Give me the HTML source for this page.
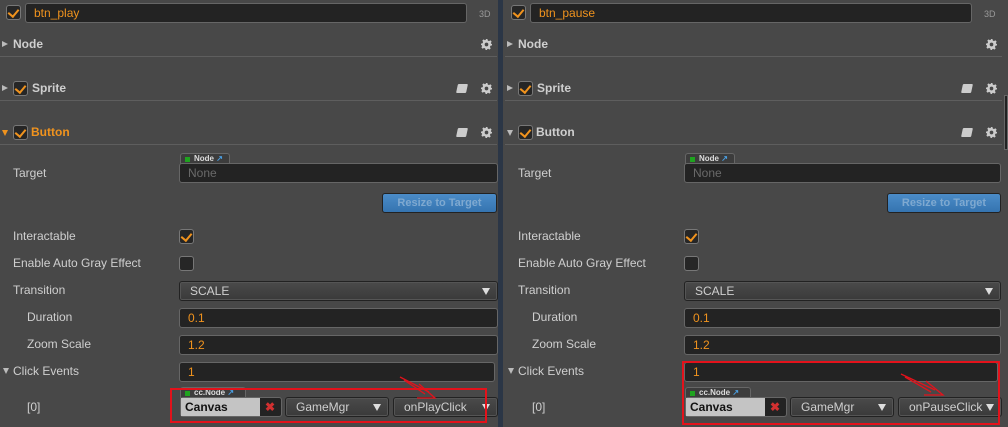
<!DOCTYPE html>
<html><head><style>
*{box-sizing:border-box;margin:0;padding:0}
body{width:1008px;height:427px;background:#484848;font-family:"Liberation Sans",Arial,sans-serif;font-size:12px;color:#cfcfcf;position:relative;overflow:hidden}
.p{position:absolute;top:0;width:498px;height:427px}
.a{position:absolute}
.lbl{position:absolute;line-height:14px;white-space:nowrap}
.cb{position:absolute;width:15px;height:15px;background:#262626;border:1px solid #777;border-radius:3px}
.cb.on::after{content:"";position:absolute;left:3px;top:1px;width:5px;height:8px;border:solid #f0931e;border-width:0 2.5px 2.5px 0;transform:rotate(40deg)}
.in{position:absolute;height:20px;background:#232323;border:1px solid #666;border-radius:3px;color:#f0931e;padding-left:8px;line-height:18px}
.sel{position:absolute;height:20px;background:linear-gradient(#4a4a4a,#3a3a3a);border:1px solid #222;border-radius:3px;color:#cfcfcf;padding-left:10px;line-height:18px;box-shadow:inset 0 0 0 1px #555}
.sel::after{content:"";position:absolute;right:7px;top:6px;border-left:4px solid transparent;border-right:4px solid transparent;border-top:7px solid #ddd}
.hd{position:absolute;left:0;width:497px;height:1px;background:#5e5e5e}
.b{font-weight:bold}
.tri{position:absolute;width:0;height:0;border-top:3.5px solid transparent;border-bottom:3.5px solid transparent;border-left:6px solid #bbb}
.trd{position:absolute;width:0;height:0;border-left:3.5px solid transparent;border-right:3.5px solid transparent;border-top:6px solid #bbb}
.gear{position:absolute;width:11px;height:11px}
.book{position:absolute;width:10px;height:9px;background:#ccc;border-radius:1px;transform:skewX(-12deg)}
.tab{position:absolute;height:11px;background:#3c3c3c;border:1px solid #666;border-bottom:none;border-radius:3px 3px 0 0;font-size:8px;font-weight:bold;line-height:10px;padding-left:13px;color:#ddd}
.tab::before{content:"";position:absolute;left:4px;top:3px;width:5px;height:5px;background:#1fa31f}
.red{position:absolute;border:2px solid #e3121b}
.clip{display:block;overflow:hidden;white-space:nowrap;width:78px}
</style></head><body>

<div class="a" style="left:498px;top:0;width:5px;height:427px;background:#2b3646"></div>
<div class="a" style="left:1004px;top:95px;width:4px;height:55px;background:#222;border:1px solid #666"></div>

<svg width="0" height="0" style="position:absolute"><defs><symbol id="g" viewBox="0 0 12 12"><path fill="#ccc" d="M5 0h2l.4 1.7 1.3.6 1.5-.9 1.4 1.4-.9 1.5.6 1.3L12 5v2l-1.7.4-.6 1.3.9 1.5-1.4 1.4-1.5-.9-1.3.6L7 12H5l-.4-1.7-1.3-.6-1.5.9-1.4-1.4.9-1.5-.6-1.3L0 7V5l1.7-.4.6-1.3-.9-1.5 1.4-1.4 1.5.9 1.3-.6z"/><circle cx="6" cy="6" r="2" fill="#484848"/></symbol></defs></svg>

<div class="p" style="left:0">
 <div class="cb on" style="left:6px;top:5px"></div>
 <div class="in" style="left:25px;top:3px;width:442px;">btn_play</div>
 <div class="lbl" style="left:479px;top:7px;font-size:9px;color:#999">3D</div>
 <div class="tri" style="left:2px;top:41px"></div>
 <div class="lbl b" style="left:13px;top:37px">Node</div>
 <svg class="gear" style="left:481px;top:39px"><use href="#g"/></svg>
 <div class="hd" style="top:56px"></div>
 <div class="tri" style="left:2px;top:85px"></div>
 <div class="cb on" style="left:13px;top:81px"></div>
 <div class="lbl b" style="left:32px;top:81px">Sprite</div>
 <div class="book" style="left:457px;top:84px"></div>
 <svg class="gear" style="left:481px;top:83px"><use href="#g"/></svg>
 <div class="hd" style="top:100px"></div>
 <div class="trd" style="left:2px;top:130px;border-top-color:#f0931e"></div>
 <div class="cb on" style="left:13px;top:125px"></div>
 <div class="lbl b" style="left:31px;top:125px;color:#f0931e">Button</div>
 <div class="book" style="left:457px;top:128px"></div>
 <svg class="gear" style="left:481px;top:127px"><use href="#g"/></svg>
 <div class="hd" style="top:144px"></div>
 <div class="lbl" style="left:13px;top:166px">Target</div>
 <div class="tab" style="left:180px;top:153px;width:50px">Node <span style="color:#4a9ee0">↗</span></div>
 <div class="in" style="left:179px;top:163px;width:319px;color:#6a6a6a">None</div>
 <div class="a" style="left:382px;top:193px;width:115px;height:20px;background:linear-gradient(#4b8cc8,#3574b0);border:1px solid #222;border-radius:3px;color:#7fa9d0;font-weight:bold;font-size:11px;text-align:center;line-height:18px">Resize to Target</div>
 <div class="lbl" style="left:13px;top:229px">Interactable</div>
 <div class="cb on" style="left:179px;top:229px"></div>
 <div class="lbl" style="left:13px;top:256px">Enable Auto Gray Effect</div>
 <div class="cb" style="left:179px;top:256px"></div>
 <div class="lbl" style="left:13px;top:283px">Transition</div>
 <div class="sel" style="left:179px;top:281px;width:319px">SCALE</div>
 <div class="lbl" style="left:27px;top:310px">Duration</div>
 <div class="in" style="left:179px;top:308px;width:319px">0.1</div>
 <div class="lbl" style="left:27px;top:337px">Zoom Scale</div>
 <div class="in" style="left:179px;top:335px;width:319px">1.2</div>
 <div class="trd" style="left:3px;top:368px"></div>
 <div class="lbl" style="left:13px;top:364px">Click Events</div>
 <div class="in" style="left:179px;top:362px;width:316px">1</div>
 <div class="lbl" style="left:27px;top:400px">[0]</div>
 <div class="tab" style="left:180px;top:387px;width:66px">cc.Node <span style="color:#4a9ee0">↗</span></div>
 <div class="a" style="left:180px;top:397px;width:102px;height:20px;background:#232323;border:1px solid #666;border-radius:3px"></div>
 <div class="a" style="left:181px;top:398px;width:79px;height:18px;background:#c4c4c4;color:#111;font-weight:bold;padding-left:4px;line-height:18px">Canvas</div>
 <div class="lbl" style="left:265px;top:400px;color:#d23030;font-weight:bold">✖</div>
 <div class="sel" style="left:285px;top:397px;width:104px">GameMgr</div>
 <div class="sel" style="left:393px;top:397px;width:105px"><span class="clip">onPlayClick</span></div>
 <div class="red" style="left:170px;top:388px;width:317px;height:35px"></div>
 <svg class="a" style="left:395px;top:372px" width="50" height="32"><path d="M5 5 L34 20" stroke="#e3121b" stroke-width="1.3" fill="none"/><path d="M9 8 L30 22" stroke="#e3121b" stroke-width="1.3" fill="none"/><path d="M24 12 L40 26 L22 26" stroke="#e3121b" stroke-width="1.3" fill="none"/></svg>
</div>

<div class="p" style="left:505px">
 <div class="cb on" style="left:6px;top:5px"></div>
 <div class="in" style="left:25px;top:3px;width:442px;">btn_pause</div>
 <div class="lbl" style="left:479px;top:7px;font-size:9px;color:#999">3D</div>
 <div class="tri" style="left:2px;top:41px"></div>
 <div class="lbl b" style="left:13px;top:37px">Node</div>
 <svg class="gear" style="left:481px;top:39px"><use href="#g"/></svg>
 <div class="hd" style="top:56px"></div>
 <div class="tri" style="left:2px;top:85px"></div>
 <div class="cb on" style="left:13px;top:81px"></div>
 <div class="lbl b" style="left:32px;top:81px">Sprite</div>
 <div class="book" style="left:457px;top:84px"></div>
 <svg class="gear" style="left:481px;top:83px"><use href="#g"/></svg>
 <div class="hd" style="top:100px"></div>
 <div class="trd" style="left:2px;top:130px"></div>
 <div class="cb on" style="left:13px;top:125px"></div>
 <div class="lbl b" style="left:31px;top:125px">Button</div>
 <div class="book" style="left:457px;top:128px"></div>
 <svg class="gear" style="left:481px;top:127px"><use href="#g"/></svg>
 <div class="hd" style="top:144px"></div>
 <div class="lbl" style="left:13px;top:166px">Target</div>
 <div class="tab" style="left:180px;top:153px;width:50px">Node <span style="color:#4a9ee0">↗</span></div>
 <div class="in" style="left:179px;top:163px;width:317px;color:#6a6a6a">None</div>
 <div class="a" style="left:382px;top:193px;width:114px;height:20px;background:linear-gradient(#4b8cc8,#3574b0);border:1px solid #222;border-radius:3px;color:#7fa9d0;font-weight:bold;font-size:11px;text-align:center;line-height:18px">Resize to Target</div>
 <div class="lbl" style="left:13px;top:229px">Interactable</div>
 <div class="cb on" style="left:179px;top:229px"></div>
 <div class="lbl" style="left:13px;top:256px">Enable Auto Gray Effect</div>
 <div class="cb" style="left:179px;top:256px"></div>
 <div class="lbl" style="left:13px;top:283px">Transition</div>
 <div class="sel" style="left:179px;top:281px;width:317px">SCALE</div>
 <div class="lbl" style="left:27px;top:310px">Duration</div>
 <div class="in" style="left:179px;top:308px;width:317px">0.1</div>
 <div class="lbl" style="left:27px;top:337px">Zoom Scale</div>
 <div class="in" style="left:179px;top:335px;width:317px">1.2</div>
 <div class="trd" style="left:3px;top:368px"></div>
 <div class="lbl" style="left:13px;top:364px">Click Events</div>
 <div class="in" style="left:179px;top:362px;width:314px">1</div>
 <div class="lbl" style="left:27px;top:400px">[0]</div>
 <div class="tab" style="left:180px;top:387px;width:66px">cc.Node <span style="color:#4a9ee0">↗</span></div>
 <div class="a" style="left:180px;top:397px;width:102px;height:20px;background:#232323;border:1px solid #666;border-radius:3px"></div>
 <div class="a" style="left:181px;top:398px;width:79px;height:18px;background:#c4c4c4;color:#111;font-weight:bold;padding-left:4px;line-height:18px">Canvas</div>
 <div class="lbl" style="left:265px;top:400px;color:#d23030;font-weight:bold">✖</div>
 <div class="sel" style="left:285px;top:397px;width:104px">GameMgr</div>
 <div class="sel" style="left:393px;top:397px;width:104px"><span class="clip" style="width:74px">onPauseClick</span></div>
 <div class="red" style="left:177px;top:361px;width:318px;height:64px"></div>
 <svg class="a" style="left:392px;top:370px" width="55" height="32"><path d="M4 4 L38 20" stroke="#e3121b" stroke-width="1.3" fill="none"/><path d="M8 7 L34 22" stroke="#e3121b" stroke-width="1.3" fill="none"/><path d="M29 11 L46 25 L27 25" stroke="#e3121b" stroke-width="1.3" fill="none"/></svg>
</div>
</body></html>
